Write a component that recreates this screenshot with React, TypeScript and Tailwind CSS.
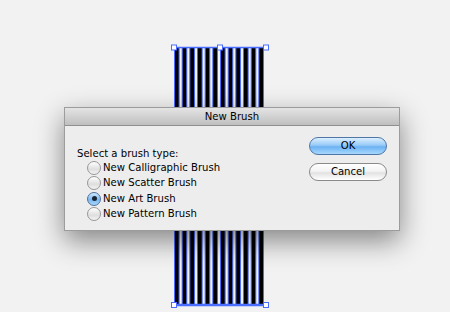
import React from "react";

const font = { fontFamily: '"DejaVu Sans", "Liberation Sans", sans-serif' };

function Art() {
  const stripes = Array.from({ length: 12 }, (_, i) => 175 + i * 7.67);
  return (
    <svg
      className="absolute left-0 top-0"
      width={450}
      height={312}
      viewBox="0 0 450 312"
    >
      {stripes.map((x, i) => (
        <rect
          key={i}
          x={x - 0.5}
          y={47.5}
          width={4.6}
          height={258}
          fill="#000"
          stroke="#4a6cff"
          strokeWidth={1}
        />
      ))}
      <line x1={174} y1={47.5} x2={266} y2={47.5} stroke="#4a6cff" strokeWidth={1.5} />
      <line x1={174} y1={305} x2={266} y2={305} stroke="#4a6cff" strokeWidth={2.5} />
      {[
        [174, 47.5],
        [220, 47.5],
        [266, 47.5],
        [174, 305],
        [266, 305],
      ].map(([cx, cy], i) => (
        <rect
          key={i}
          x={cx - 2.5}
          y={cy - 2.5}
          width={5}
          height={5}
          fill="#fff"
          stroke="#4a6cff"
          strokeWidth={1}
        />
      ))}
    </svg>
  );
}

function Radio({ checked, label }: { checked?: boolean; label: string }) {
  return (
    <div className="flex h-[15.5px] items-center gap-[2px]">
      {checked ? (
        <div className="flex h-[14px] w-[14px] items-center justify-center rounded-full border border-[#4d6f98] bg-[linear-gradient(to_bottom,#d4ebfd,#7ab9f2_55%,#a9d6fb)]">
          <div className="h-[5px] w-[5px] rounded-full bg-[#1b2633]" />
        </div>
      ) : (
        <div className="h-[14px] w-[14px] rounded-full border border-[#979797] bg-[linear-gradient(to_bottom,#ffffff,#dedede_60%,#f4f4f4)]" />
      )}
      <span className="text-[10.1px] leading-none text-black">{label}</span>
    </div>
  );
}

function Dialog() {
  return (
    <div
      className="absolute left-[64px] top-[107px] flex h-[124px] w-[336px] flex-col border border-[#9c9c9c] bg-[#ededed] shadow-[0_10px_26px_rgba(0,0,0,0.45)]"
      style={font}
    >
      <div className="flex h-[18px] items-center justify-center border-b border-[#8f8f8f] bg-[linear-gradient(to_bottom,#e4e4e4,#bfbfbf)] text-[10.1px] text-black">
        New Brush
      </div>
      <div className="flex flex-1 justify-between pl-[12px] pr-[12px]">
        <div className="flex flex-col pt-[22px]">
          <div className="h-[12px] text-[10.1px] leading-[12px] text-black">
            Select a brush type:
          </div>
          <div className="ml-[10px] flex flex-col">
            <Radio label="New Calligraphic Brush" />
            <Radio label="New Scatter Brush" />
            <Radio checked label="New Art Brush" />
            <Radio label="New Pattern Brush" />
          </div>
        </div>
        <div className="flex flex-col gap-[8px] pt-[11px]">
          <div className="flex h-[18px] w-[78px] items-center justify-center rounded-full border border-[#4f76a6] bg-[linear-gradient(to_bottom,#dcefff,#98cbf8_45%,#6cb2f3_55%,#a8d8fd)] text-[10.1px] text-black">
            OK
          </div>
          <div className="flex h-[18px] w-[78px] items-center justify-center rounded-full border border-[#8a8a8a] bg-[linear-gradient(to_bottom,#ffffff,#f3f3f3_45%,#e2e2e2_55%,#ffffff)] text-[10.1px] text-black">
            Cancel
          </div>
        </div>
      </div>
    </div>
  );
}

export default function App() {
  return (
    <div className="relative h-[312px] w-[450px] overflow-hidden bg-[#f2f2f2]">
      <Art />
      <Dialog />
    </div>
  );
}
